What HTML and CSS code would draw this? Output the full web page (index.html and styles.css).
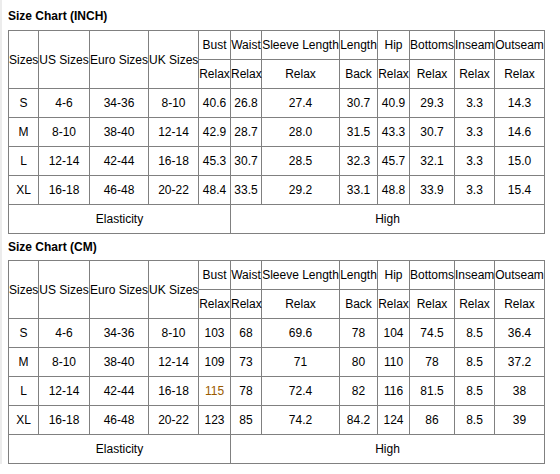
FILE: index.html
```html
<!DOCTYPE html>
<html lang="en">

<head>
    <meta charset="UTF-8">
    <title>Size Chart</title>
    <link rel="stylesheet" href="styles.css">
</head>

<body>
    <div class="chart-title first">Size Chart (INCH)</div>
    <table class="size-table">
        <colgroup>
            <col class="c-size"><col class="c-us"><col class="c-euro"><col class="c-uk">
            <col class="c-bust"><col class="c-waist"><col class="c-sleeve"><col class="c-length">
            <col class="c-hip"><col class="c-bottoms"><col class="c-inseam"><col class="c-outseam">
        </colgroup>
        <tr>
            <td rowspan="2">Sizes</td>
            <td rowspan="2">US Sizes</td>
            <td rowspan="2">Euro Sizes</td>
            <td rowspan="2">UK Sizes</td>
            <td>Bust</td>
            <td>Waist</td>
            <td>Sleeve Length</td>
            <td>Length</td>
            <td>Hip</td>
            <td>Bottoms</td>
            <td>Inseam</td>
            <td>Outseam</td>
        </tr>
        <tr>
            <td>Relax</td><td>Relax</td><td>Relax</td><td>Back</td><td>Relax</td><td>Relax</td><td>Relax</td><td>Relax</td>
        </tr>
        <tr>
            <td>S</td><td>4-6</td><td>34-36</td><td>8-10</td><td>40.6</td><td>26.8</td><td>27.4</td><td>30.7</td><td>40.9</td><td>29.3</td><td>3.3</td><td>14.3</td>
        </tr>
        <tr>
            <td>M</td><td>8-10</td><td>38-40</td><td>12-14</td><td>42.9</td><td>28.7</td><td>28.0</td><td>31.5</td><td>43.3</td><td>30.7</td><td>3.3</td><td>14.6</td>
        </tr>
        <tr>
            <td>L</td><td>12-14</td><td>42-44</td><td>16-18</td><td>45.3</td><td>30.7</td><td>28.5</td><td>32.3</td><td>45.7</td><td>32.1</td><td>3.3</td><td>15.0</td>
        </tr>
        <tr>
            <td>XL</td><td>16-18</td><td>46-48</td><td>20-22</td><td>48.4</td><td>33.5</td><td>29.2</td><td>33.1</td><td>48.8</td><td>33.9</td><td>3.3</td><td>15.4</td>
        </tr>
        <tr>
            <td colspan="5">Elasticity</td>
            <td colspan="7">High</td>
        </tr>
    </table>

    <div class="chart-title second">Size Chart (CM)</div>
    <table class="size-table">
        <colgroup>
            <col class="c-size"><col class="c-us"><col class="c-euro"><col class="c-uk">
            <col class="c-bust"><col class="c-waist"><col class="c-sleeve"><col class="c-length">
            <col class="c-hip"><col class="c-bottoms"><col class="c-inseam"><col class="c-outseam">
        </colgroup>
        <tr>
            <td rowspan="2">Sizes</td>
            <td rowspan="2">US Sizes</td>
            <td rowspan="2">Euro Sizes</td>
            <td rowspan="2">UK Sizes</td>
            <td>Bust</td>
            <td>Waist</td>
            <td>Sleeve Length</td>
            <td>Length</td>
            <td>Hip</td>
            <td>Bottoms</td>
            <td>Inseam</td>
            <td>Outseam</td>
        </tr>
        <tr>
            <td>Relax</td><td>Relax</td><td>Relax</td><td>Back</td><td>Relax</td><td>Relax</td><td>Relax</td><td>Relax</td>
        </tr>
        <tr>
            <td>S</td><td>4-6</td><td>34-36</td><td>8-10</td><td>103</td><td>68</td><td>69.6</td><td>78</td><td>104</td><td>74.5</td><td>8.5</td><td>36.4</td>
        </tr>
        <tr>
            <td>M</td><td>8-10</td><td>38-40</td><td>12-14</td><td>109</td><td>73</td><td>71</td><td>80</td><td>110</td><td>78</td><td>8.5</td><td>37.2</td>
        </tr>
        <tr>
            <td>L</td><td>12-14</td><td>42-44</td><td>16-18</td><td class="note">115</td><td>78</td><td>72.4</td><td>82</td><td>116</td><td>81.5</td><td>8.5</td><td>38</td>
        </tr>
        <tr>
            <td>XL</td><td>16-18</td><td>46-48</td><td>20-22</td><td>123</td><td>85</td><td>74.2</td><td>84.2</td><td>124</td><td>86</td><td>8.5</td><td>39</td>
        </tr>
        <tr>
            <td colspan="5">Elasticity</td>
            <td colspan="7">High</td>
        </tr>
    </table>
</body>

</html>
```

FILE: styles.css
```css
html {
    border-left: 2px solid #ececec;
    background-color: #fff;
}

body {
    font-family: 'Liberation Sans', Arial, sans-serif;
    font-size: 12px;
    color: #000;
    margin: 8px 0 0 6px;
}

.chart-title {
    font-weight: bold;
    line-height: 14px;
}

.chart-title.first {
    margin: 1px 0 7px;
}

.chart-title.second {
    margin: 6px 0 6px;
}

.size-table {
    border-collapse: collapse;
    table-layout: fixed;
    width: 537px;
}

.size-table td {
    border: 1px solid #808080;
    padding: 0;
    height: 28px;
    text-align: center;
    vertical-align: middle;
    white-space: nowrap;
}

.size-table .note {
    color: #9a5a00;
}

.c-size { width: 30px; }
.c-us { width: 51px; }
.c-euro { width: 59px; }
.c-uk { width: 50px; }
.c-bust { width: 32px; }
.c-waist { width: 31px; }
.c-sleeve { width: 78px; }
.c-length { width: 38px; }
.c-hip { width: 32px; }
.c-bottoms { width: 45px; }
.c-inseam { width: 40px; }
.c-outseam { width: 50px; }
```
